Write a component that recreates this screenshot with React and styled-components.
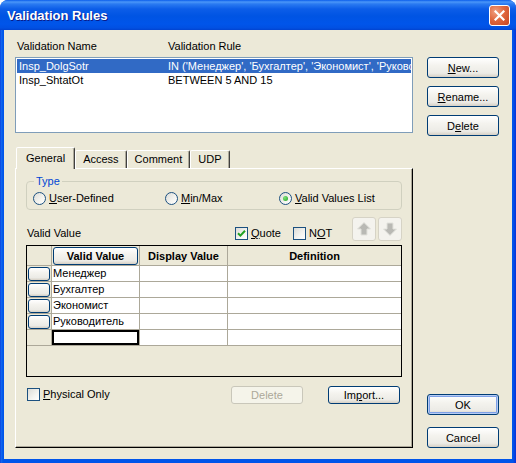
import React from 'react'
import styled, { createGlobalStyle } from 'styled-components'

const GlobalStyle = createGlobalStyle`
  html, body { margin:0; padding:0; background:#fff; }
  body { font-family:"Liberation Sans", Arial, sans-serif; font-size:11px; color:#000; }
`

const rows = [
  { name: 'Insp_DolgSotr', rule: "IN ('Менеджер', 'Бухгалтер', 'Экономист', 'Руково", selected: true },
  { name: 'Insp_ShtatOt', rule: 'BETWEEN 5 AND 15' },
]

const values = ['Менеджер', 'Бухгалтер', 'Экономист', 'Руководитель']

function Check() {
  return (
    <svg width="9" height="9" viewBox="0 0 9 9">
      <path d="M1 4.2 L3.4 6.6 L8 1.8" fill="none" stroke="#21A121" strokeWidth="2" />
    </svg>
  )
}

function Arrow({ down }) {
  return (
    <svg width="16" height="16" viewBox="0 0 16 16" style={down ? { transform: 'scaleY(-1)' } : null}>
      <path d="M8 1.5 L14.5 8 L11 8 L11 14 L5 14 L5 8 L1.5 8 Z" fill="#B9B9B4" stroke="#E2E2DC" strokeWidth="1" />
    </svg>
  )
}

function Details() {
  return (
    <Window>
      <GlobalStyle />
      <TitleBar>
        <Title>Validation Rules</Title>
        <CloseButton>
          <svg width="11" height="11" viewBox="0 0 11 11">
            <path d="M1.5 1.5 L9.5 9.5 M9.5 1.5 L1.5 9.5" stroke="#fff" strokeWidth="2.2" strokeLinecap="square" />
          </svg>
        </CloseButton>
      </TitleBar>
      <Body>
        <LeftColumn>
          <ListHeader>
            <span>Validation Name</span>
            <span>Validation Rule</span>
          </ListHeader>
          <ListBox>
            {rows.map(r => (
              <ListRow key={r.name} $selected={r.selected}>
                <span>{r.name}</span>
                <span>{r.rule}</span>
              </ListRow>
            ))}
          </ListBox>
          <TabRow>
            <Tab $active>General</Tab>
            <Tab>Access</Tab>
            <Tab>Comment</Tab>
            <Tab>UDP</Tab>
          </TabRow>
          <Panel>
            <Group>
              <Legend>Type</Legend>
              <RadioRow>
                <RadioItem><Circle /><span><Key>U</Key>ser-Defined</span></RadioItem>
                <RadioItem><Circle /><span><Key>M</Key>in/Max</span></RadioItem>
                <RadioItem><Circle $checked /><span><Key>V</Key>alid Values List</span></RadioItem>
              </RadioRow>
            </Group>
            <ValueBar>
              <ValueLabel>Valid Value</ValueLabel>
              <CheckItem $gap={12}><Box><Check /></Box><span><Key>Q</Key>uote</span></CheckItem>
              <CheckItem><Box /><span>N<Key>O</Key>T</span></CheckItem>
              <Spacer />
              <ArrowButton><Arrow /></ArrowButton>
              <ArrowButton><Arrow down /></ArrowButton>
            </ValueBar>
            <Grid>
              <HeadCell />
              <HeadCell><HeaderButton>Valid Value</HeaderButton></HeadCell>
              <HeadCell>Display Value</HeadCell>
              <HeadCell>Definition</HeadCell>
              {values.map(v => (
                <React.Fragment key={v}>
                  <RowHead><RowButton /></RowHead>
                  <Cell>{v}</Cell>
                  <Cell />
                  <Cell />
                </React.Fragment>
              ))}
              <RowHead />
              <Cell $edit />
              <Cell />
              <Cell />
            </Grid>
            <BottomRow>
              <CheckItem $grow><Box /><span><Key>P</Key>hysical Only</span></CheckItem>
              <Button $h={18} disabled>Delete</Button>
              <Button $h={18}>Im<Key>p</Key>ort...</Button>
            </BottomRow>
          </Panel>
        </LeftColumn>
        <RightColumn>
          <ButtonStack>
            <Button><Key>N</Key>ew...</Button>
            <Button><Key>R</Key>ename...</Button>
            <Button>D<Key>e</Key>lete</Button>
          </ButtonStack>
          <ButtonStack $gap={12}>
            <Button $default>OK</Button>
            <Button>Cancel</Button>
          </ButtonStack>
        </RightColumn>
      </Body>
    </Window>
  )
}

export default Details

const Window=styled.div`
width:516px;
height:463px;
display:flex;
flex-direction:column;
background:linear-gradient(to right,#0831D9 0,#166AEE 1px,#0055EA 3px,#0055EA 513px,#0831D9 516px);
border-radius:8px 8px 0 0;
overflow:hidden;
`

const TitleBar=styled.div`
height:30px;
flex:none;
display:flex;
align-items:center;
justify-content:space-between;
padding:0 6px 0 7px;
background:linear-gradient(to bottom,#0A5DEB 0,#4B97F8 2px,#2A7AF1 4px,#0C5DE8 9px,#0054E3 16px,#0055EA 24px,#0150E2 28px,#0143CF 30px);
`

const Title=styled.span`
color:#fff;
font-weight:bold;
font-size:13px;
text-shadow:1px 1px 0 #0A1C8A;
`

const CloseButton=styled.div`
width:21px;
height:21px;
box-sizing:border-box;
border:1px solid #fff;
border-radius:3px;
display:flex;
align-items:center;
justify-content:center;
background:radial-gradient(circle at 30% 30%,#F0A082 0%,#E0683F 45%,#C74521 100%);
`

const Body=styled.div`
flex:1;
margin:0 4px 4px;
background:#ECE9D8;
display:flex;
gap:14px;
padding:10px 13px 11px 11px;
`

const LeftColumn=styled.div`
width:398px;
display:flex;
flex-direction:column;
`

const ListHeader=styled.div`
display:grid;
grid-template-columns:151px 1fr;
padding-left:2px;
line-height:13px;
margin-bottom:4px;
`

const ListBox=styled.div`
height:76px;
box-sizing:border-box;
border:1px solid #7F9DB9;
background:#fff;
padding:1px;
overflow:hidden;
`

const ListRow=styled.div`
display:grid;
grid-template-columns:149px minmax(0,1fr);
height:14px;
line-height:14px;
padding-left:2px;
white-space:nowrap;
overflow:hidden;
background:${p => p.$selected ? '#316AC5' : 'transparent'};
color:${p => p.$selected ? '#fff' : '#000'};
span{ overflow:hidden; }
`

const TabRow=styled.div`
display:flex;
align-items:flex-end;
height:21px;
margin-top:14px;
padding-left:1px;
`

const Tab=styled.div`
box-sizing:border-box;
height:${p => p.$active ? 22 : 18}px;
margin-bottom:${p => p.$active ? -1 : 0}px;
padding:${p => p.$active ? '4px 9px 0' : '2px 7px 0'};
line-height:13px;
background:#ECE9D8;
border:1px solid;
border-bottom:none;
border-color:#fff #404040 transparent #fff;
box-shadow:inset -1px 0 0 #ACA899;
border-radius:2px 2px 0 0;
position:relative;
z-index:${p => p.$active ? 1 : 0};
`

const Panel=styled.div`
flex:1;
display:flex;
flex-direction:column;
border:1px solid;
border-color:#fff #000 #000 #fff;
box-shadow:inset -1px -1px 0 #ACA899;
padding:6px 10px 0;
`

const Group=styled.fieldset`
margin:0;
padding:4px 6px 4px;
border:1px solid #D0D0BF;
border-radius:4px;
`

const Legend=styled.legend`
color:#0046D5;
padding:0 2px;
margin-left:1px;
line-height:13px;
`

const RadioRow=styled.div`
display:grid;
grid-template-columns:132px 114px 1fr;
height:13px;
`

const RadioItem=styled.label`
display:flex;
align-items:center;
gap:3px;
line-height:13px;
`

const Circle=styled.span`
box-sizing:border-box;
width:13px;
height:13px;
border-radius:50%;
border:1px solid #1C5180;
background:linear-gradient(135deg,#DCDCD7 0%,#F4F4F0 60%,#FFFFFF 100%);
display:flex;
align-items:center;
justify-content:center;
&::after{
  content:'';
  display:${p => p.$checked ? 'block' : 'none'};
  width:5px;
  height:5px;
  border-radius:50%;
  background:radial-gradient(circle at 35% 35%,#7FE27B,#21A121);
}
`

const Key=styled.span`
text-decoration:underline;
`

const ValueBar=styled.div`
display:flex;
align-items:flex-end;
height:24px;
margin-top:7px;
`

const ValueLabel=styled.span`
width:208px;
padding-left:1px;
line-height:13px;
margin-bottom:1px;
`

const CheckItem=styled.label`
display:flex;
align-items:center;
gap:3px;
line-height:13px;
margin-bottom:1px;
margin-right:${p => p.$gap || 0}px;
flex:${p => p.$grow ? 1 : 'none'};
padding-left:${p => p.$grow ? 1 : 0}px;
`

const Box=styled.span`
box-sizing:border-box;
width:13px;
height:13px;
border:1px solid #1C5180;
background:linear-gradient(135deg,#DCDCD7 0%,#F4F4F0 60%,#FFFFFF 100%);
display:flex;
align-items:center;
justify-content:center;
`

const Spacer=styled.div`
flex:1;
`

const ArrowButton=styled.div`
box-sizing:border-box;
width:24px;
height:24px;
margin-left:4px;
margin-right:-2px;
border:1px solid #D6D3C6;
border-radius:3px;
background:#F4F3EE;
display:flex;
align-items:center;
justify-content:center;
&:last-child{ margin-right:0; }
`

const Grid=styled.div`
margin-top:4px;
height:132px;
box-sizing:border-box;
border:1px solid #000;
background:#ECE9D8;
display:grid;
grid-template-columns:25px 88px 88px 1fr;
grid-template-rows:20px repeat(5,16px);
align-content:start;
`

const HeadCell=styled.div`
border-right:1px solid #ACA899;
border-bottom:1px solid #ACA899;
display:flex;
align-items:center;
justify-content:center;
font-weight:bold;
&:nth-child(4){ border-right:none; }
`

const HeaderButton=styled.div`
box-sizing:border-box;
width:calc(100% - 2px);
height:18px;
border:1px solid #003C74;
border-radius:3px;
background:linear-gradient(to bottom,#FFFFFF 0%,#F4F3EE 40%,#ECEBE6 80%,#D6D0C5 100%);
display:flex;
align-items:center;
justify-content:center;
`

const RowHead=styled.div`
border-right:1px solid #ACA899;
border-bottom:1px solid #ACA899;
display:flex;
align-items:center;
justify-content:center;
`

const RowButton=styled.div`
box-sizing:border-box;
width:22px;
height:14px;
border:1px solid #003C74;
border-radius:3px;
background:linear-gradient(to bottom,#FFFFFF 0%,#F4F3EE 40%,#ECEBE6 80%,#D6D0C5 100%);
`

const Cell=styled.div`
background:#fff;
border-right:1px solid #ACA899;
border-bottom:1px solid #ACA899;
line-height:15px;
padding-left:1px;
white-space:nowrap;
box-shadow:${p => p.$edit ? 'inset 0 0 0 2px #000' : 'none'};
&:nth-child(4n){ border-right:none; }
`

const BottomRow=styled.div`
display:flex;
align-items:center;
gap:25px;
margin-top:9px;
height:18px;
padding-right:2px;
`

const RightColumn=styled.div`
width:72px;
display:flex;
flex-direction:column;
justify-content:space-between;
padding-top:17px;
`

const ButtonStack=styled.div`
display:flex;
flex-direction:column;
gap:${p => p.$gap || 8}px;
`

const Button=styled.button`
box-sizing:border-box;
width:72px;
height:${p => p.$h || 21}px;
padding:0;
font:inherit;
color:#000;
border:1px solid #003C74;
border-radius:3px;
background:linear-gradient(to bottom,#FFFFFF 0%,#F4F3EE 40%,#ECEBE6 80%,#D6D0C5 100%);
box-shadow:${p => p.$default ? 'inset 0 0 0 1px #B6CCF4, inset 0 0 0 2px #7EA0E6' : 'none'};
&:disabled{
  color:#ACA899;
  border-color:#C9C7BA;
  background:#F5F4EA;
}
`
